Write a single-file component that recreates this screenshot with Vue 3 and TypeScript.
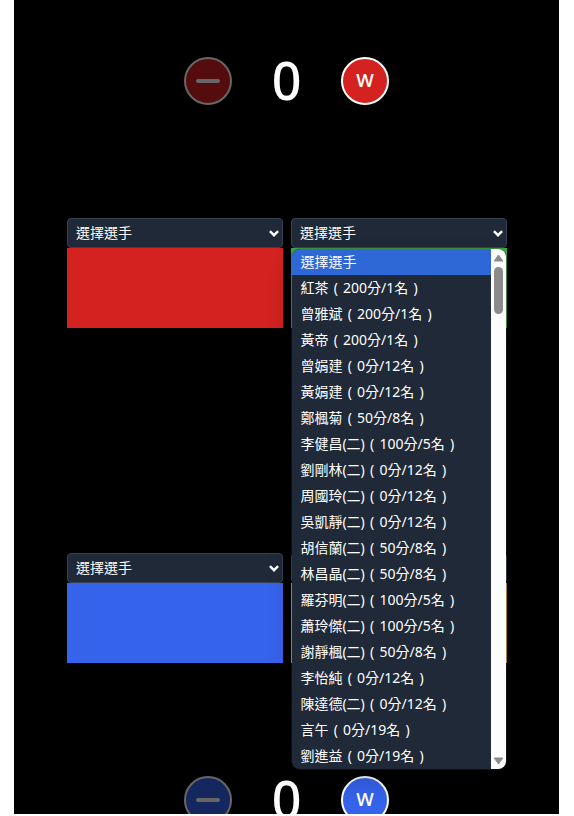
<script setup lang="ts">
import { ref } from 'vue'

interface Player {
  name: string
  points: number
  rank: number
}

const placeholder = '選擇選手'

const raw: [string, number, number][] = [
  ['紅茶', 200, 1],
  ['曾雅斌', 200, 1],
  ['黃帝', 200, 1],
  ['曾娟建', 0, 12],
  ['黃娟建', 0, 12],
  ['鄭楓菊', 50, 8],
  ['李健昌(二)', 100, 5],
  ['劉剛林(二)', 0, 12],
  ['周國玲(二)', 0, 12],
  ['吳凱靜(二)', 0, 12],
  ['胡信蘭(二)', 50, 8],
  ['林昌晶(二)', 50, 8],
  ['羅芬明(二)', 100, 5],
  ['蕭玲傑(二)', 100, 5],
  ['謝靜楓(二)', 50, 8],
  ['李怡純', 0, 12],
  ['陳達德(二)', 0, 12],
  ['言午', 0, 19],
  ['劉進益', 0, 19],
]
const players: Player[] = raw.map(([name, points, rank]) => ({ name, points, rank }))

const teams = [
  { id: 'red', slots: ['red', 'green'] },
  { id: 'blue', slots: ['blue', 'yellow'] },
]
const scores = ref<Record<string, number>>({ red: 0, blue: 0 })
const openSlot = ref('green')
</script>

<template>
  <main class="board">
    <section v-for="team in teams" :key="team.id" class="team" :class="`team-${team.id}`">
      <div class="score">
        <button class="round" disabled aria-label="minus"><span class="minus"></span></button>
        <span class="value">{{ scores[team.id] }}</span>
        <button class="round" @click="scores[team.id]++">W</button>
      </div>
      <div class="slots">
        <div v-for="slot in team.slots" :key="slot" class="slot">
          <div class="select" @click="openSlot = slot">
            <span>{{ placeholder }}</span>
            <svg class="chevron" width="10" height="7" viewBox="0 0 10 7">
              <path d="M.9 1.2 5 5.2 9.1 1.2" fill="none" stroke="#fff" stroke-width="2.4" />
            </svg>
          </div>
          <div class="court" :class="`court-${slot}`"></div>
          <div v-if="openSlot === slot" class="popup">
            <ul class="options">
              <li class="active">{{ placeholder }}</li>
              <li v-for="p in players" :key="p.name">{{ p.name }} ( {{ p.points }}分/{{ p.rank }}名 )</li>
            </ul>
            <div class="scrollbar">
              <svg width="11" height="8" viewBox="0 0 11 8">
                <path d="M5.5 1 9.8 7H1.2Z" fill="#8b8b8b" stroke="#8b8b8b" stroke-linejoin="round" />
              </svg>
              <span class="thumb"></span>
              <svg class="down" width="11" height="8" viewBox="0 0 11 8">
                <path d="M5.5 7 9.8 1H1.2Z" fill="#8b8b8b" stroke="#8b8b8b" stroke-linejoin="round" />
              </svg>
            </div>
          </div>
        </div>
      </div>
    </section>
  </main>
</template>

<style>
body {
  background: #fff;
  overflow: hidden;
}
</style>

<style scoped>
* {
  box-sizing: border-box;
}
.board {
  width: 545px;
  height: 814px;
  margin-left: 14px;
  padding: 57px 52px 0 53px;
  overflow: hidden;
  display: flex;
  flex-direction: column;
  background: #000;
  color: #fff;
  font-family: 'Noto Sans', 'Noto Sans CJK TC', sans-serif;
}
.team {
  display: flex;
  flex-direction: column;
  flex: none;
  gap: 113px;
}
.team-blue {
  flex-direction: column-reverse;
  margin-top: 225px;
}
.score {
  height: 48px;
  padding-right: 1px;
  display: flex;
  justify-content: center;
  align-items: center;
  gap: 40px;
}
.value {
  width: 29px;
  height: 52px;
  display: flex;
  justify-content: center;
  font: 540 52px/49px 'Noto Sans', sans-serif;
}
.round {
  width: 48px;
  height: 48px;
  flex: none;
  padding: 0 0 2px;
  display: flex;
  justify-content: center;
  align-items: center;
  border: 2px solid #fff;
  border-radius: 50%;
  background: #d3221f;
  color: #fff;
  font: 650 18.5px/28px 'Open Sans', sans-serif;
}
.team-blue .round {
  background: #3563eb;
}
.round:disabled {
  padding: 0;
  opacity: 0.4;
}
.minus {
  width: 24px;
  height: 4px;
  border-radius: 2px;
  background: #fff;
}
.slots {
  display: flex;
  gap: 8px;
}
.slot {
  position: relative;
  width: 216px;
}
.select {
  height: 30px;
  padding: 0 3px 0 8px;
  display: flex;
  justify-content: space-between;
  align-items: center;
  border: 1px solid #374151;
  border-radius: 4px;
  background: #1f2937;
  font-size: 14px;
  line-height: 20px;
}
.court {
  height: 80px;
}
.court-red {
  background: #d3221f;
}
.court-green {
  background: #3ca840;
}
.court-blue {
  background: #3563eb;
}
.court-yellow {
  background: #d9ae22;
}
.popup {
  position: absolute;
  z-index: 2;
  top: 31px;
  left: 1px;
  width: 214px;
  height: 520px;
  display: flex;
  overflow: hidden;
  border-radius: 8px;
  background: #1f2937;
  box-shadow: 0 0 0 1px rgba(60, 60, 60, 0.25), 0 12px 24px rgba(0, 0, 0, 0.2);
}
.options {
  flex: 1;
  margin: 0;
  padding: 0;
  list-style: none;
}
.options li {
  height: 26px;
  padding-left: 8.4px;
  font-size: 14px;
  line-height: 26px;
  word-spacing: 1.6px;
  white-space: nowrap;
}
.options .active {
  background: #2e68d6;
}
.scrollbar {
  width: 15px;
  padding: 5px 0 4px;
  display: flex;
  flex-direction: column;
  align-items: center;
  background: #fcfcfc;
}
.thumb {
  width: 9px;
  height: 47px;
  margin-top: 5px;
  border-radius: 5px;
  background: #8b8b8b;
}
.down {
  margin-top: auto;
}
</style>
